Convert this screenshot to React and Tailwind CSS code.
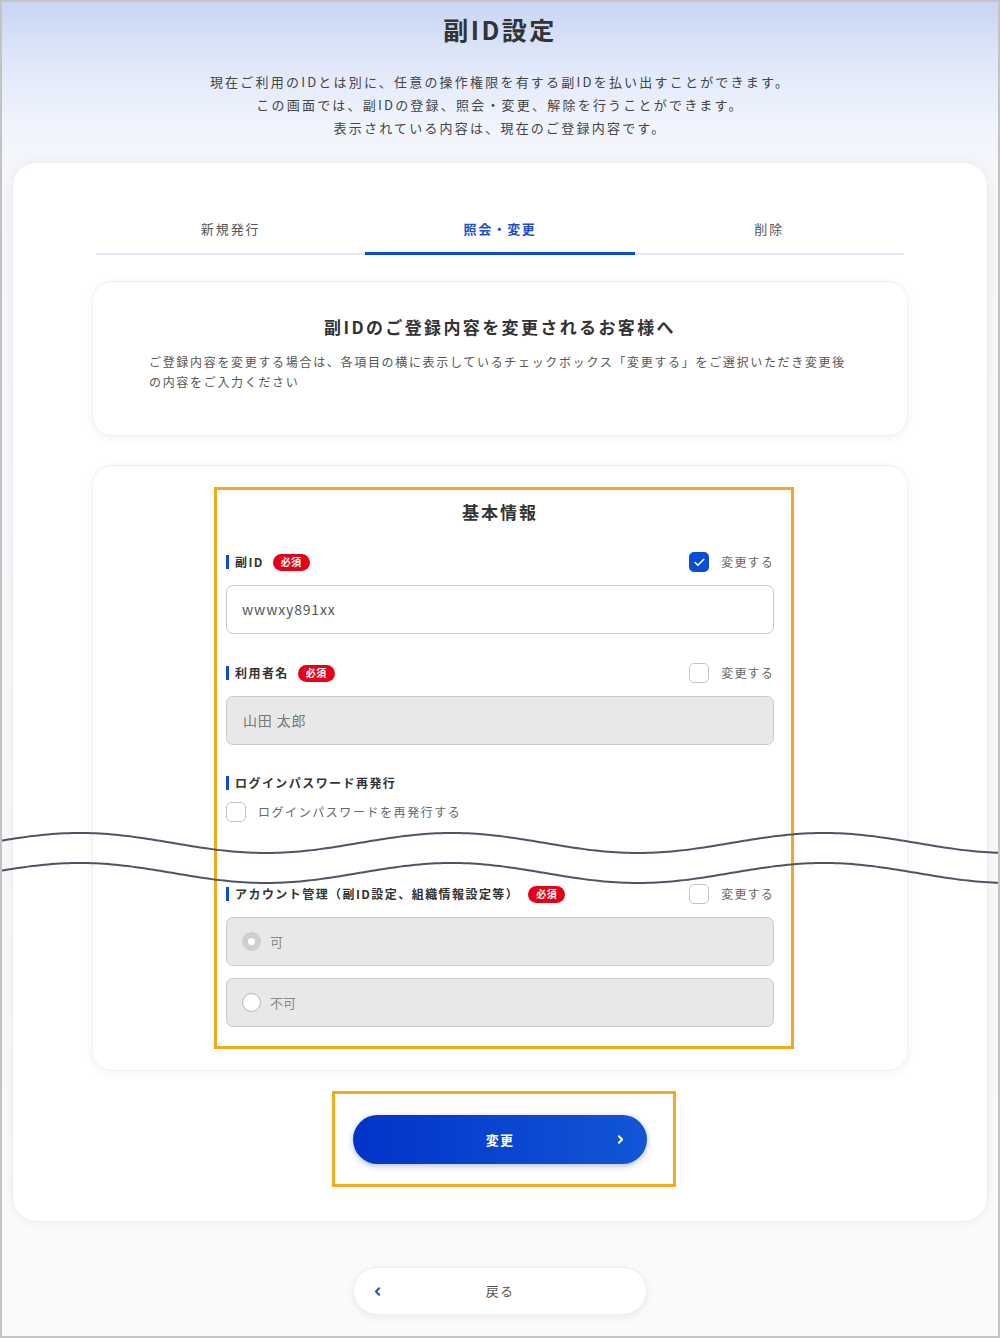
import React from "react";
import { Check, ChevronRight, ChevronLeft } from "lucide-react";

function wavePath(c) {
  let d = "";
  for (let x = 0; x <= 1000; x += 4) {
    const y = c - 10 * Math.cos((2 * Math.PI * (x - 80)) / 372);
    d += (x === 0 ? "M" : "L") + x + " " + y.toFixed(2) + " ";
  }
  return d;
}

function Badge() {
  return (
    <span className="ml-[9px] inline-flex h-[17px] items-center rounded-full bg-[#e50019] px-[8px] text-[10px] font-bold leading-none tracking-[0.05em] text-white">
      必須
    </span>
  );
}

function CheckBox({ checked }) {
  return checked ? (
    <span className="flex h-[20px] w-[20px] items-center justify-center rounded-[5px] bg-[#0b4ed6]">
      <Check size={13} strokeWidth={3} color="#fff" />
    </span>
  ) : (
    <span className="h-[20px] w-[20px] rounded-[5px] border-[1.5px] border-[#c2c4c8] bg-white" />
  );
}

function FieldLabel({ text, required, change, checked }) {
  return (
    <div className="flex h-[20px] items-center justify-between">
      <div className="flex items-center">
        <span className="mr-[6px] h-[14px] w-[3px] bg-[#0b4ed6]" />
        <span className="text-[12px] font-bold tracking-[0.12em] text-[#333]">{text}</span>
        {required && <Badge />}
      </div>
      {change && (
        <div className="flex items-center gap-[12px]">
          <CheckBox checked={checked} />
          <span className="text-[12px] tracking-[0.1em] text-[#666]">変更する</span>
        </div>
      )}
    </div>
  );
}

export default function App() {
  return (
    <div className="relative h-[1338px] w-[1000px] overflow-hidden border-2 border-[#c3c3c3] bg-[linear-gradient(180deg,#c9d6f3_0px,#dfe7f9_60px,#eff3fc_120px,#f6f7fa_170px,#f8f8fa_600px,#fbfbfb_1338px)] font-['Noto_Sans_CJK_JP','Noto_Sans',sans-serif] text-[#333]">
      <div className="pt-[11px] text-center">
        <h1 className="text-[25px] font-bold leading-[32px] tracking-[0.1em] text-[#333]">副ID設定</h1>
        <div className="mt-[25px] text-[13px] leading-[23px] tracking-[0.17em] text-[#444]">
          <p>現在ご利用のIDとは別に、任意の操作権限を有する副IDを払い出すことができます。</p>
          <p>この画面では、副IDの登録、照会・変更、解除を行うことができます。</p>
          <p>表示されている内容は、現在のご登録内容です。</p>
        </div>
      </div>

      <div className="mx-[10px] mt-[23px] rounded-[24px] border border-[#eceef3] bg-white px-[79px] pb-[57px] shadow-[0_0_14px_rgba(20,30,60,0.05)]">
        <div className="mx-[4px] flex border-b-2 border-[#e3e7f4] pt-[56px]">
          <div className="flex-1 pb-[14px] text-center text-[13px] leading-[20px] tracking-[0.15em] text-[#555]">新規発行</div>
          <div className="relative flex-1 pb-[14px] text-center text-[13px] font-bold leading-[20px] tracking-[0.12em] text-[#1d4fc4]">
            照会・変更
            <span className="absolute -bottom-[2px] left-0 right-0 h-[3px] bg-[#0b4ed6]" />
          </div>
          <div className="flex-1 pb-[14px] text-center text-[13px] leading-[20px] tracking-[0.15em] text-[#555]">削除</div>
        </div>

        <div className="mt-[26px] rounded-[20px] border border-[#eef0f4] bg-white px-[56px] pb-[43px] pt-[33px] shadow-[0_2px_10px_rgba(20,30,60,0.06)]">
          <h2 className="text-center text-[17px] font-bold leading-[24px] tracking-[0.14em] text-[#333]">副IDのご登録内容を変更されるお客様へ</h2>
          <p className="mt-[13px] text-[12px] leading-[20px] tracking-[0.14em] text-[#555]">
            ご登録内容を変更する場合は、各項目の横に表示しているチェックボックス「変更する」をご選択いただき変更後の内容をご入力ください
          </p>
        </div>

        <div className="relative mt-[29px] rounded-[20px] border border-[#eef0f4] bg-white pb-[43px] pt-[34px] shadow-[0_2px_10px_rgba(20,30,60,0.06)]">
          <div className="mx-auto w-[548px]">
            <h3 className="text-center text-[17px] font-bold leading-[24px] tracking-[0.12em] text-[#333]">基本情報</h3>

            <div className="mt-[28px]">
              <FieldLabel text="副ID" required change checked />
              <div className="mt-[13px] flex h-[49px] items-center rounded-[7px] border-[1.5px] border-[#c9cacd] bg-white px-[15px] text-[14px] tracking-[0.06em] text-[#555]">
                wwwxy891xx
              </div>
            </div>

            <div className="mt-[29px]">
              <FieldLabel text="利用者名" required change checked={false} />
              <div className="mt-[13px] flex h-[49px] items-center rounded-[7px] border-[1.5px] border-[#c9cacd] bg-[#e8e8e8] px-[16px] text-[14px] tracking-[0.06em] text-[#777]">
                山田 太郎
              </div>
            </div>

            <div className="mt-[28px]">
              <FieldLabel text="ログインパスワード再発行" />
              <div className="mt-[9px] flex h-[20px] items-center gap-[12px]">
                <CheckBox checked={false} />
                <span className="text-[12px] tracking-[0.13em] text-[#666]">ログインパスワードを再発行する</span>
              </div>
            </div>

            <div className="mt-[62px]">
              <FieldLabel text="アカウント管理（副ID設定、組織情報設定等）" required change checked={false} />
              <div className="mt-[13px] flex h-[49px] items-center gap-[9px] rounded-[7px] border-[1.5px] border-[#c9cacd] bg-[#e8e8e8] px-[15px] text-[13px] text-[#888]">
                <span className="flex h-[19px] w-[19px] items-center justify-center rounded-full bg-[#cfcfcf]">
                  <span className="h-[7px] w-[7px] rounded-full bg-white" />
                </span>
                可
              </div>
              <div className="mt-[12px] flex h-[49px] items-center gap-[9px] rounded-[7px] border-[1.5px] border-[#c9cacd] bg-[#e8e8e8] px-[15px] text-[13px] text-[#888]">
                <span className="h-[19px] w-[19px] rounded-full border-[1.5px] border-[#b5b5b5] bg-white" />
                不可
              </div>
            </div>
          </div>
          <div className="pointer-events-none absolute left-[121px] top-[21px] h-[562px] w-[580px] border-[3px] border-[#f4a81d]" />
        </div>

        <div className="mt-[44px] flex justify-center">
          <div className="relative">
            <button className="relative flex h-[49px] w-[294px] items-center justify-center rounded-full bg-[linear-gradient(90deg,#0134c8,#1256d6)] text-[13px] font-bold tracking-[0.1em] text-white shadow-[0_2px_6px_rgba(10,40,160,0.3)]">
              変更
              <ChevronRight size={13} strokeWidth={3.5} className="absolute right-[20px]" />
            </button>
            <div className="pointer-events-none absolute -left-[21px] -top-[24px] h-[96px] w-[344px] border-[3px] border-[#f4a81d]" />
          </div>
        </div>
      </div>

      <div className="mt-[45px] flex justify-center">
        <button className="relative flex h-[48px] w-[294px] items-center justify-center rounded-full border border-[#eceef2] bg-white text-[13px] tracking-[0.1em] text-[#555] shadow-[0_2px_8px_rgba(20,30,60,0.08)]">
          <ChevronLeft size={13} strokeWidth={3.5} color="#1d4fc4" className="absolute left-[17px]" />
          戻る
        </button>
      </div>

      <svg className="pointer-events-none absolute -left-[2px] top-[816px]" width="1000" height="76" viewBox="0 816 1000 76">
        <path d={wavePath(841)} fill="none" stroke="#4b5563" strokeWidth="2" />
        <path d={wavePath(871)} fill="none" stroke="#4b5563" strokeWidth="2" />
      </svg>
    </div>
  );
}
